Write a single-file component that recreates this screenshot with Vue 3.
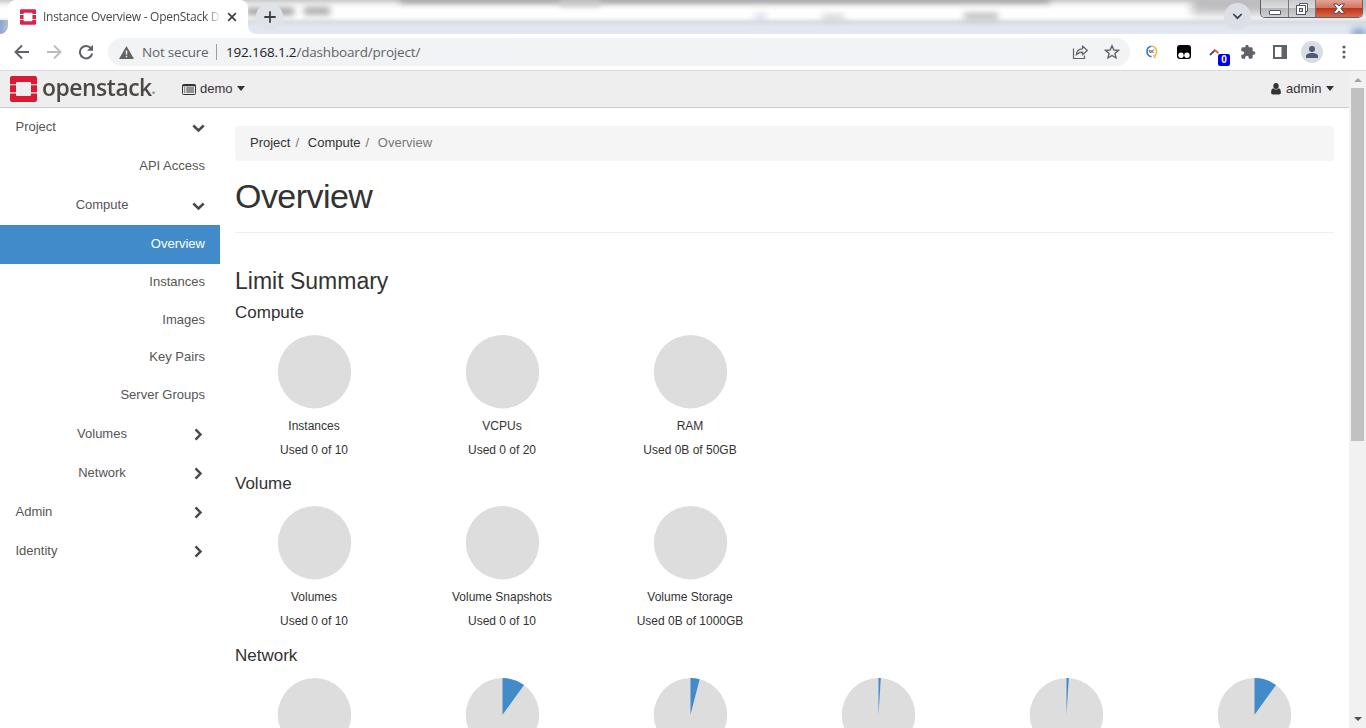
<script setup>
const nav = [
  { label: 'Project', level: 'top', arrow: 'down' },
  { label: 'API Access', level: 'leaf' },
  { label: 'Compute', level: 'group', arrow: 'down' },
  { label: 'Overview', level: 'leaf', active: true },
  { label: 'Instances', level: 'leaf', tight: true },
  { label: 'Images', level: 'leaf', tight: true },
  { label: 'Key Pairs', level: 'leaf', tight: true },
  { label: 'Server Groups', level: 'leaf', tight: true },
  { label: 'Volumes', level: 'group', arrow: 'right' },
  { label: 'Network', level: 'group', arrow: 'right' },
  { label: 'Admin', level: 'top', arrow: 'right' },
  { label: 'Identity', level: 'top', arrow: 'right' },
]

const sections = [
  {
    title: 'Compute',
    charts: [
      { name: 'Instances', usage: 'Used 0 of 10', pct: 0 },
      { name: 'VCPUs', usage: 'Used 0 of 20', pct: 0 },
      { name: 'RAM', usage: 'Used 0B of 50GB', pct: 0 },
    ],
  },
  {
    title: 'Volume',
    charts: [
      { name: 'Volumes', usage: 'Used 0 of 10', pct: 0 },
      { name: 'Volume Snapshots', usage: 'Used 0 of 10', pct: 0 },
      { name: 'Volume Storage', usage: 'Used 0B of 1000GB', pct: 0 },
    ],
  },
  {
    title: 'Network',
    charts: [{ pct: 0 }, { pct: 10 }, { pct: 4 }, { pct: 1 }, { pct: 1 }, { pct: 10 }],
  },
]

function slice(pct) {
  const a = (pct / 100) * Math.PI * 2
  const x = 37.5 + 36.7 * Math.sin(a)
  const y = 36.7 - 36.7 * Math.cos(a)
  return `M37.5 36.7V0A36.7 36.7 0 0 1 ${x.toFixed(2)} ${y.toFixed(2)}Z`
}
</script>

<template>
  <div class="window">
    <div class="tabstrip">
      <div class="glass">
        <i class="topshade"></i>
        <i class="smudge s1"></i><i class="smudge s2"></i><i class="smudge s3"></i>
        <i class="smudge s4"></i><i class="smudge s5"></i><i class="smudge s6"></i>
        <i class="smudge s7"></i><i class="smudge s8"></i>
      </div>
      <div class="tab">
        <svg class="favicon" width="16" height="16" viewBox="0 0 27 26">
          <path fill="#dc2349" d="M2 0h23a2 2 0 0 1 2 2v6h-6V7a1 1 0 0 0-1-1H7a1 1 0 0 0-1 1v1H0V2a2 2 0 0 1 2-2zM0 9.500h6v7H0zM21 9.500h6v7h-6zM0 18h6v1a1 1 0 0 0 1 1h13a1 1 0 0 0 1-1v-1h6v6a2 2 0 0 1-2 2H2a2 2 0 0 1-2-2z" />
        </svg>
        <span class="tabtitle">Instance Overview - OpenStack D</span>
        <svg class="tabclose" width="10" height="10" viewBox="0 0 10 10"><path d="M1.200 1.200l7.600 7.600M8.800 1.200L1.200 8.800" stroke="#3c4043" stroke-width="1.700" fill="none" /></svg>
        <svg class="tabcurve" width="8" height="8" viewBox="0 0 8 8"><path d="M0 0v8h8A8 8 0 0 1 0 0z" fill="#fff" /></svg>
        <svg class="tabcurve left" width="8" height="8" viewBox="0 0 8 8"><path d="M8 0v8H0A8 8 0 0 0 8 0z" fill="#fff" /></svg>
      </div>
      <div class="newtab">
        <svg width="12" height="12" viewBox="0 0 12 12"><path d="M6 .3v11.400M.3 6h11.400" stroke="#3c4043" stroke-width="1.800" /></svg>
      </div>
      <div class="spacer"></div>
      <div class="tabsearch">
        <svg width="11" height="7" viewBox="0 0 10 7"><path d="M.8 1l4.200 4.200L9.200 1" stroke="#3c4043" stroke-width="1.700" fill="none" /></svg>
      </div>
      <div class="controls">
        <span class="ctl"><svg width="14" height="14" viewBox="0 0 14 14"><rect x="1.500" y="8.500" width="11" height="4" rx=".5" fill="#fff" stroke="#535666" /></svg></span>
        <span class="ctl restore"><svg width="14" height="14" viewBox="0 0 14 14"><path d="M4.500 1.500h8v8h-2v-6h-6z" fill="#fff" stroke="#535666" /><rect x="1.500" y="3.500" width="9" height="9" fill="#fff" stroke="#535666" /><rect x="4.500" y="6.500" width="3" height="3" fill="#ccd" stroke="#535666" /></svg></span>
        <span class="ctl close"><svg width="14" height="12" viewBox="0 0 14 12"><path d="M1.500 1h3.600L7 3.200 8.900 1h3.600L9 5.500l3.700 4.800H8.900L7 7.900l-1.900 2.400H1.300L5 5.500z" fill="#fff" stroke="#4e4855" stroke-width="1" /></svg></span>
      </div>
    </div>

    <div class="toolbar">
      <svg class="back" width="16" height="16" viewBox="0 0 16 16"><path d="M15 8H2M8 1.500L1.500 8 8 14.500" fill="none" stroke="#5f6368" stroke-width="1.900" /></svg>
      <svg class="fwd" width="16" height="16" viewBox="0 0 16 16"><path d="M1 8h13M8 1.500L14.500 8 8 14.500" fill="none" stroke="#babcbe" stroke-width="1.900" /></svg>
      <svg class="reload" width="16" height="16" viewBox="0 0 16 16"><path d="M13.300 4.700A6.200 6.200 0 1 0 14.200 9.500" fill="none" stroke="#5f6368" stroke-width="2" /><path d="M15 .8v6H9z" fill="#5f6368" /></svg>
      <div class="omnibox">
        <svg class="warn" width="15" height="13" viewBox="0 0 15 13"><path fill="#5f6368" d="M7.500 0L15 13H0z" /><path stroke="#f1f3f4" stroke-width="1.500" d="M7.500 4.500v4M7.500 9.700v1.500" /></svg>
        <span class="secure">Not secure</span>
        <span class="sep"></span>
        <span class="url"><span class="host">192.168.1.2</span>/dashboard/project/</span>
        <svg class="share" width="17" height="16" viewBox="0 0 17 16"><path d="M1.500 4.500v10h11v-3" fill="none" stroke="#5f6368" stroke-width="1.200" /><path d="M4.200 11c.4-4 2.800-6 6.300-6.200V2l4.800 4.500-4.800 4.300V8.200C7.800 8.200 5.800 9 4.200 11z" fill="none" stroke="#5f6368" stroke-width="1.200" stroke-linejoin="round" /></svg>
        <svg class="star" width="16" height="16" viewBox="0 0 16 16"><path d="M8 1.800l1.850 4.200 4.600.4-3.500 3 1.050 4.500L8 11.500 4 13.900l1.050-4.500-3.500-3 4.600-.4z" fill="none" stroke="#5f6368" stroke-width="1.400" /></svg>
      </div>
      <svg class="ext e1" width="14" height="14" viewBox="0 0 14 14"><path d="M6.500 1.300A5.200 5.200 0 0 0 6.500 11.600" fill="none" stroke="#3b78bd" stroke-width="1.600" /><path d="M6.500 1.300A5.200 5.200 0 0 1 9 11l1.500 2" fill="none" stroke="#edb84c" stroke-width="1.600" /><path d="M4 5l1.500 3L9 4.300M5.500 5l3 3" fill="none" stroke="#456" stroke-width="1" /></svg>
      <svg class="ext e2" width="14" height="14" viewBox="0 0 14 14"><rect width="14" height="14" rx="3" fill="#000" /><circle cx="4" cy="10.300" r="2.700" fill="#fff" /><circle cx="10" cy="10.300" r="2.700" fill="#fff" /></svg>
      <div class="ext e3">
        <svg width="12" height="8" viewBox="0 0 12 8"><path d="M1 7l5-5" stroke="#555a62" stroke-width="2" /><path d="M5.300 1.700L9.500 5" stroke="#d8623a" stroke-width="2" /></svg>
        <span class="badge">0</span>
      </div>
      <svg class="ext e4" width="16" height="16" viewBox="0 0 24 24"><path fill="#5f6368" d="M20.500 11H19V7a2 2 0 0 0-2-2h-4V3.500a2.500 2.500 0 0 0-5 0V5H4a2 2 0 0 0-2 2v3.800h1.500a2.700 2.700 0 0 1 0 5.400H2V20a2 2 0 0 0 2 2h3.800v-1.500a2.700 2.700 0 0 1 5.400 0V22H17a2 2 0 0 0 2-2v-4h1.500a2.500 2.500 0 0 0 0-5z" /></svg>
      <svg class="ext e5" width="14" height="14" viewBox="0 0 14 14"><path fill="#5f6368" fill-rule="evenodd" d="M0 0h14v14H0zM2 2v10h6.500V2z" /></svg>
      <span class="avatar"><svg width="12" height="12" viewBox="0 0 12 12"><circle cx="6" cy="3" r="3" fill="#4d5b76" /><path d="M0 12V10c0-2 3-3 6-3s6 1 6 3v2z" fill="#4d5b76" /></svg></span>
      <svg class="menu" width="4" height="14" viewBox="0 0 4 14"><g fill="#5f6368"><circle cx="2" cy="2" r="1.600" /><circle cx="2" cy="7" r="1.600" /><circle cx="2" cy="12" r="1.600" /></g></svg>
    </div>

    <div class="viewport">
      <div class="page">
        <header class="navbar">
          <svg class="logo" width="27" height="26" viewBox="0 0 27 26">
            <path fill="#da1a32" d="M2 0h23a2 2 0 0 1 2 2v6.200h-6V7a1 1 0 0 0-1-1H7a1 1 0 0 0-1 1v1.200H0V2a2 2 0 0 1 2-2zM0 9.300h6v7H0zM21 9.300h6v7h-6zM0 17.500h6V19a1 1 0 0 0 1 1h13a1 1 0 0 0 1-1v-1.500h6V24a2 2 0 0 1-2 2H2a2 2 0 0 1-2-2z" />
          </svg>
          <span class="brand"><span class="word">openstack</span><span class="reg">.</span></span>
          <svg class="listicon" width="14" height="11" viewBox="0 0 14 11"><rect x=".5" y=".5" width="13" height="10" rx="1" fill="none" stroke="#333" /><path d="M.5 1.500h13" stroke="#333" stroke-width="1.500" /><path d="M2 4h1.300M4.300 4H12M2 6h1.300M4.300 6H12M2 8h1.300M4.300 8H12" stroke="#333" stroke-width="1" /></svg>
          <span class="navtext demo">demo</span>
          <i class="caret"></i>
          <div class="spacer"></div>
          <svg class="user" width="10" height="12" viewBox="0 0 10 12"><ellipse cx="5" cy="3.100" rx="2.700" ry="3" fill="#333" /><path d="M2.200 5.300C.8 5.600.2 7.300.1 9.300 0 10.800.8 11.500 2 11.500h6c1.200 0 2-.7 1.900-2.200C9.800 7.300 9.200 5.600 7.800 5.300 6.300 7 3.700 7 2.200 5.300z" fill="#333" /></svg>
          <span class="navtext admin">admin</span>
          <i class="caret last"></i>
        </header>
        <div class="body">
          <nav class="sidebar">
            <div v-for="n in nav" :key="n.label" class="item" :class="[n.level, { active: n.active, tight: n.tight }]">
              <span class="lbl">{{ n.label }}</span>
              <svg v-if="n.arrow === 'down'" class="down" width="13" height="9" viewBox="0 0 13 9"><path d="M1.300 1.500l5.200 5 5.200-5" fill="none" stroke="#4a4a4a" stroke-width="2.500" /></svg>
              <svg v-if="n.arrow === 'right'" class="right" width="9" height="13" viewBox="0 0 9 13"><path d="M1.500 1.300l5 5.200-5 5.200" fill="none" stroke="#4a4a4a" stroke-width="2.500" /></svg>
            </div>
          </nav>
          <main class="main">
            <div class="crumbs">
              <span>Project</span><span class="slash">/</span><span>Compute</span><span class="slash">/</span><span class="here">Overview</span>
            </div>
            <h1>Overview</h1>
            <h3>Limit Summary</h3>
            <section v-for="s in sections" :key="s.title">
              <h4>{{ s.title }}</h4>
              <div class="charts">
                <div v-for="(c, i) in s.charts" :key="i" class="chart">
                  <svg class="pie" width="74" height="74" viewBox="0 0 74 74">
                    <circle cx="37.500" cy="36.700" r="36.700" fill="#ddd" />
                    <path v-if="c.pct" :d="slice(c.pct)" fill="#428bca" />
                  </svg>
                  <div class="name">{{ c.name }}</div>
                  <div class="usage">{{ c.usage }}</div>
                </div>
              </div>
            </section>
          </main>
        </div>
      </div>
      <div class="scrollbar">
        <i class="up"></i>
        <div class="thumb"></div>
        <div class="spacer"></div>
        <i class="dn"></i>
      </div>
    </div>
  </div>
</template>

<style>
html, body { margin: 0; overflow: hidden; background: #fff; }
</style>

<style scoped>
* { box-sizing: border-box; }
.window { width: 1366px; height: 728px; overflow: hidden; display: flex; flex-direction: column; font-family: "Liberation Sans", Arial, sans-serif; color: #333; background: #fff; }
svg { display: block; flex: none; }
.spacer { flex: 1; }

.tabstrip { position: relative; height: 34px; flex: none; display: flex; align-items: flex-start; }
.glass { position: absolute; inset: 0; overflow: hidden; background: linear-gradient(90deg, rgba(90,125,180,.6), rgba(90,125,180,.3) 9px, transparent 9px) 0 20px no-repeat, linear-gradient(#c9cacc 0, #f4f4f4 5px, #fefefe 9px, #fefefe 17px, #dadde1 22px, #dfe5ed 26px, #e3e9f2 34px); }
.smudge { position: absolute; filter: blur(3px); background: #999; }
.topshade { position: absolute; left: 400px; top: -4px; width: 650px; height: 7px; background: #a2a2a4; filter: blur(3px); }
.s1 { left: 246px; top: 8px; width: 48px; height: 7px; background: #999; }
.s2 { left: 304px; top: 7px; width: 26px; height: 8px; background: #aaa; }
.s3 { left: 560px; top: 0; width: 40px; height: 6px; background: #ccc; }
.s4 { left: 755px; top: 14px; width: 11px; height: 6px; background: #d5d5e8; }
.s5 { left: 822px; top: 15px; width: 22px; height: 5px; background: #ccc; }
.s6 { left: 964px; top: 13px; width: 34px; height: 7px; background: #bbb; }
.s7 { left: 1192px; top: -6px; width: 190px; height: 20px; background: #bdbdbf; filter: blur(5px); }
.s8 { left: 1352px; top: 28px; width: 14px; height: 10px; background: #93a9d4; }
.tab { position: relative; margin-left: 8px; width: 240px; height: 34px; background: #fff; border-radius: 8px 8px 0 0; display: flex; align-items: center; }
.tabcurve { position: absolute; right: -8px; bottom: 0; }
.tabcurve.left { right: auto; left: -8px; }
.favicon { margin-left: 12px; }
.tabtitle { margin-left: 7px; width: 177px; overflow: hidden; white-space: nowrap; font: 12px/18px "Open Sans", sans-serif; letter-spacing: -.27px; color: #45494d; -webkit-mask-image: linear-gradient(90deg, #000 162px, transparent 178px); mask-image: linear-gradient(90deg, #000 162px, transparent 178px); }
.tabclose { margin-left: 7px; }
.newtab, .tabsearch { position: relative; display: flex; align-items: center; justify-content: center; border-radius: 50%; background: #dfe3e8; }
.newtab { margin: 3px 0 0 8px; width: 27px; height: 27px; }
.tabsearch { margin: 3px 9px 0 0; width: 27px; height: 27px; background: #dcdfe5; }
.controls { position: relative; display: flex; height: 18px; margin-right: 3px; border: 1px solid #5f5f63; border-top: 0; border-radius: 0 0 5px 5px; overflow: hidden; }
.ctl { width: 28px; height: 17px; display: flex; align-items: center; justify-content: center; background: linear-gradient(#c9c9cb, #dcdcde 45%, #b7b8bb 50%, #cfd0d3); border-right: 1px solid #77777b; }
.ctl.restore { width: 27px; }
.ctl.close { width: 46px; border: 0; background: linear-gradient(#e0a598, #d57560 45%, #bd3419 50%, #d86a4c); }

.toolbar { height: 37px; flex: none; display: flex; align-items: center; border-bottom: 1px solid #d9dadb; background: #fff; }
.back { margin-left: 14px; }
.fwd { margin-left: 16px; }
.reload { margin-left: 16px; }
.omnibox { margin-left: 14px; width: 1022px; height: 28px; border-radius: 14px; background: #f1f3f4; display: flex; align-items: center; color: #5f6368; white-space: nowrap; }
.warn { margin-left: 11px; }
.secure { margin-left: 8px; width: 68px; font: 13.500px/20px "Open Sans", sans-serif; letter-spacing: -.2px; }
.sep { width: 1px; height: 16px; margin-left: 6px; background: #9b9ea1; }
.url { margin-left: 9px; flex: 1; font: 13.500px/20px "Open Sans", sans-serif; letter-spacing: -.18px; }
.host { color: #202124; }
.star { margin: 0 10px 0 15px; }
.e1 { margin-left: 15px; }
.e2 { margin-left: 18px; }
.e3 { position: relative; width: 14px; height: 16px; margin-left: 20px; }
.e3 svg { margin-top: 4px; margin-left: -2px; }
.badge { position: absolute; left: 7px; top: 10px; width: 12px; height: 12px; border-radius: 2px; background: #0000e6; color: #fff; font: bold 10px/12px "Liberation Sans", sans-serif; text-align: center; }
.e4 { margin-left: 15px; }
.e5 { margin-left: 17px; }
.avatar { margin-left: 14px; width: 22px; height: 22px; border-radius: 50%; background: #dadce4; display: flex; align-items: center; justify-content: center; }
.menu { margin-left: 19px; }

.viewport { flex: 1; min-height: 0; display: flex; }
.page { width: 1349px; height: 657px; overflow: hidden; }
.navbar { height: 37px; display: flex; align-items: center; background: #eee; border-bottom: 1px solid #ccc; font-size: 13px; }
.logo { margin-left: 10px; }
.brand { position: relative; margin-left: 5px; width: 116px; height: 36px; color: #4e4845; font: 600 24px/32px "Open Sans", sans-serif; white-space: nowrap; }
.word { display: inline-block; transform: scaleX(.955); transform-origin: 0 50%; letter-spacing: -.5px; }
.reg { position: absolute; left: 109px; top: 0; color: #999; font-size: 18px; }
.listicon { margin-left: 24px; }
.navtext { font-size: 13px; line-height: 20px; color: #333; position: relative; top: -.5px; }
.demo { margin-left: 4px; width: 32px; }
.caret { width: 0; height: 0; margin-left: 5px; border: 4px solid transparent; border-top: 5px solid #333; border-bottom: 0; position: relative; top: -.5px; }
.user { margin-right: 5px; }
.admin { width: 35px; }
.caret.last { margin-right: 15px; margin-left: 5px; }

.body { display: flex; }
.sidebar { width: 220px; flex: none; }
.item { height: 39px; padding: 0 15px 1px 15.500px; display: flex; align-items: center; justify-content: space-between; font-size: 13px; color: #555; line-height: 18px; }
.item.tight { height: 37.750px; }
.item.leaf { justify-content: flex-end; }
.item.leaf.tight { padding-bottom: 2px; }
.item.group .lbl { width: 173px; text-align: center; }
.item.active { height: 39px; background: #428bca; color: #fff; }
.down { position: relative; top: 1px; }
.right { margin-right: 2px; position: relative; top: .5px; }
.item.group .lbl + svg { margin-left: -100px; }

.main { width: 1099px; margin-left: 15px; padding-top: 18px; }
.crumbs { height: 35px; padding: 0 15px; background: #f5f5f5; border-radius: 4px; font-size: 13px; line-height: 33px; white-space: pre; }
.slash { color: #777; padding: 0 8.700px 0 5px; }
.here { color: #777; }
h1, h3, h4 { font-weight: 400; margin: 0; }
h1 { height: 72px; font-size: 34px; line-height: 71px; letter-spacing: -.55px; border-bottom: 1px solid #eee; }
h3 { margin-top: 35px; font-size: 23px; line-height: 26px; }
h4 { font-size: 17px; line-height: 20px; }
section { height: 171.500px; padding-top: 8.500px; }
.charts { display: flex; gap: 30px; }
.chart { width: 158px; padding-top: 12px; text-align: center; font-size: 12px; }
.pie { margin: 0 auto; overflow: visible; }
.name { margin-top: 8px; height: 18px; line-height: 18px; }
.usage { margin-top: 6px; line-height: 18px; }

.scrollbar { width: 17px; height: 657px; background: #f1f1f1; display: flex; flex-direction: column; align-items: center; }
.up { margin-top: 7px; border: 4px solid transparent; border-bottom: 4px solid #a3a3a3; border-top: 0; }
.thumb { margin-top: 6px; margin-right: 1px; width: 13px; height: 353px; background: #c1c1c1; }
.dn { margin-bottom: 7px; border: 4px solid transparent; border-top: 4px solid #505050; border-bottom: 0; }
</style>
